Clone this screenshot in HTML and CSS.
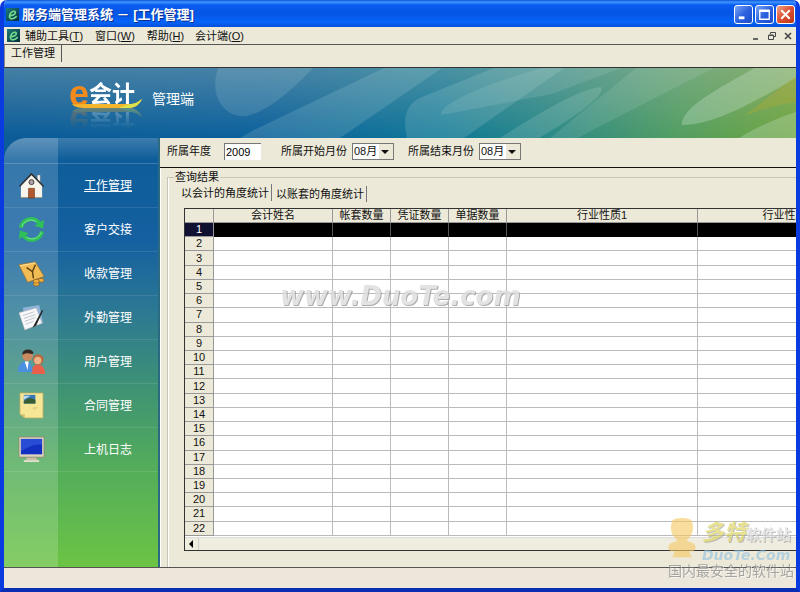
FILE: index.html
```html
<!DOCTYPE html>
<html lang="zh-CN">
<head>
<meta charset="utf-8">
<title>服务端管理系统</title>
<link rel="stylesheet" href="styles.css">
</head>
<body>
<svg class="defs" aria-hidden="true">
  <defs>
    <linearGradient id="badge" x1="0" y1="0" x2="1" y2="1"><stop offset="0" stop-color="#1f7c7a"/><stop offset="1" stop-color="#052a3a"/></linearGradient>
    <symbol id="app" viewBox="0 0 14 14">
      <rect width="14" height="14" fill="url(#badge)"/>
      <path d="M3.6 8.2C7 8.6 10.6 6.8 10 4.6 9.3 2.5 5.2 3.6 4 7.2c-.9 3 .4 4.6 2.6 4.4 2-.2 3.7-1.4 5-2.8" fill="none" stroke="#6fd98c" stroke-width="1.8"/>
    </symbol>
  </defs>
</svg>
<div class="window">
  <header class="titlebar">
    <svg class="app-icon"><use href="#app"/></svg>
    <h1>服务端管理系统 － [工作管理]</h1>
    <div class="controls">
      <button type="button" aria-label="最小化"><svg viewBox="0 0 18 18"><path d="M4 12.5h6" stroke="#fff" stroke-width="3"/></svg></button>
      <button type="button" aria-label="最大化"><svg viewBox="0 0 18 18"><path d="M4 5h10v9H4z" fill="none" stroke="#fff" stroke-width="1.4"/><path d="M3.5 5h11" stroke="#fff" stroke-width="2.6"/></svg></button>
      <button type="button" class="close" aria-label="关闭"><svg viewBox="0 0 18 18"><path d="M4.5 4.5l9 9m0-9l-9 9" stroke="#fff" stroke-width="2.2"/></svg></button>
    </div>
  </header>

  <nav class="menubar">
    <svg class="app-icon"><use href="#app"/></svg>
    <button type="button">辅助工具(<u>T</u>)</button>
    <button type="button">窗口(<u>W</u>)</button>
    <button type="button">帮助(<u>H</u>)</button>
    <button type="button">会计端(<u>O</u>)</button>
    <div class="mdi">
      <button type="button" aria-label="最小化子窗口"><svg viewBox="0 0 10 10"><path d="M2 8h5" stroke="#444" stroke-width="1.6"/></svg></button>
      <button type="button" aria-label="还原子窗口"><svg viewBox="0 0 10 10"><path d="M3.5 3V1.5h5v4H7M1.5 4.5h5v4h-5zM1.5 4h5" fill="none" stroke="#444"/></svg></button>
      <button type="button" aria-label="关闭子窗口"><svg viewBox="0 0 10 10"><path d="M2 2l6 6m0-6L2 8" stroke="#444" stroke-width="1.6"/></svg></button>
    </div>
  </nav>

  <div class="pages"><button type="button">工作管理</button></div>

  <div class="banner">
    <svg class="banner-art" viewBox="0 0 792 70" preserveAspectRatio="none" aria-hidden="true">
      <defs>
        <linearGradient id="hue"><stop offset="0" stop-color="#0a5c98"/><stop offset=".33" stop-color="#0b619c"/><stop offset=".55" stop-color="#0f7898"/><stop offset=".7" stop-color="#2c8a84"/><stop offset=".85" stop-color="#529e62"/><stop offset="1" stop-color="#70a63c"/></linearGradient>
        <linearGradient id="sheen" x2="0" y2="1"><stop offset="0" stop-color="#b0bcb8" stop-opacity=".36"/><stop offset="1" stop-color="#b0bcb8" stop-opacity="0"/></linearGradient>
      </defs>
      <rect width="792" height="70" fill="url(#hue)"/>
      <rect width="792" height="70" fill="url(#sheen)"/>
      <g fill="#dcefe8">
        <path d="M214 0c-10 30 8 50 28 48 22-4 48-28 67-48z" opacity=".14"/>
        <path d="M236 70l12-7L380 0h58L336 70z" opacity=".15"/>
        <path d="M403 70c-5-20-1-34 15-41L490 0h70L460 70z" opacity=".15"/>
        <path d="M437 47c-2-9 30-26 100-47h80L548 26z" opacity=".12"/>
        <path d="M496 70C535 45 575 21 597 19c5 8-20 26-62 51z" opacity=".16"/>
        <path d="M546 70L632 0h78c-35 18-80 40-136 70z" opacity=".12"/>
        <path d="M678 57c-2-18 44-40 72-57h42v10c-35 20-82 48-114 47z" opacity=".27"/>
        <path d="M735 70c16-10 38-20 57-26v26z" opacity=".25"/>
      </g>
      <path d="M792 8v26c-16 2-36 8-52 14 18-14 36-28 52-40z" fill="#c0a828" opacity=".3"/>
    </svg>
    <div class="brand">
      <span class="logo"><b class="logo-e">e</b><b>会计</b>
        <svg class="swoosh" viewBox="0 0 74 12" aria-hidden="true"><path d="M3 6c2 3 7 4 14 4h43c6 0 11-4 13-9-4 3-7 5-13 5H18C10 6 6 7 3 6z" fill="#f5b52a"/><path d="M50 10h10c6 0 11-4 13-9-4 3-7 5-13 5z" fill="#dde04a"/></svg>
      </span>
      <span class="edition">管理端</span>
    </div>
  </div>

  <div class="body">
    <nav class="sidebar">
      <ul>
        <li><a class="current" href="#work"><span class="pic"><svg viewBox="0 0 28 28"><path d="M20 3h3v8h-3z" fill="#fff" stroke="#777" stroke-width=".6"/><path d="M3 14L14 3l11 11v13H3z" fill="#f8f5ec"/><path d="M3 26.500h22" stroke="#9a9480"/><path d="M1.500 15L14 2l12.500 13" fill="none" stroke="#333" stroke-width="1.600"/><circle cx="14" cy="10.500" r="2.600" fill="#b0a0b0" stroke="#443" /><path d="M11 17h6v10h-6z" fill="#b05a30" stroke="#70300f" stroke-width=".7"/></svg></span><span>工作管理</span></a></li>
        <li><a href="#client"><span class="pic"><svg viewBox="0 0 28 28"><path d="M3 12C5 3 16 0 22 7.500M25 16C23 25 12 28 6 20.500" fill="none" stroke="#2fc058" stroke-width="4.200"/><path d="M27 4l-1 9-9-3zM1 24l1-9 9 3z" fill="#2fc058"/><path d="M4 11c2-6 9-9 15-5M24 17c-2 6-9 9-15 5" fill="none" stroke="#7fe79a"/></svg></span><span>客户交接</span></a></li>
        <li><a href="#receipt"><span class="pic"><svg viewBox="0 0 28 28"><path d="M1 5l17-3 9 15-17 6z" fill="#f2bc55" stroke="#a87020" stroke-width=".7"/><path d="M2 6l16-3" stroke="#ffe3a0"/><path d="M9 8l6 4 3-7M15 12l1 7" fill="none" stroke="#604010" stroke-width="1.500"/><g fill="#f0b040" stroke="#8a5a10" stroke-width=".7"><ellipse cx="19" cy="25" rx="3" ry="2"/><ellipse cx="24" cy="21" rx="3" ry="2"/><ellipse cx="19" cy="22" rx="3" ry="2"/></g></svg></span><span>收款管理</span></a></li>
        <li><a href="#field"><span class="pic"><svg viewBox="0 0 28 28"><path d="M5 4l17-3 4 19-17 4z" fill="#8fb4dc"/><path d="M1 9l18-5 6 16-18 7z" fill="#f8f8fa" stroke="#aaa" stroke-width=".6"/><path d="M5 12l12-4M6 15l12-4M7 18l11-4M8 21l8-3" stroke="#bcc3cc"/><path d="M25 6L17 21l-2 4 4-3 7-15z" fill="#252525"/></svg></span><span>外勤管理</span></a></li>
        <li><a href="#user"><span class="pic"><svg viewBox="0 0 28 28"><path d="M14 27c0-8 3-10 7-10s7 4 7 10z" fill="#e8604c"/><circle cx="21" cy="12" r="5.500" fill="#b8683a"/><circle cx="20.500" cy="13" r="3.800" fill="#eeb488"/><path d="M0 25c0-8 4-11 8-11 5 0 7 4 7 11z" fill="#4c8fe0"/><path d="M7 14h4l-1 9z" fill="#fff"/><circle cx="10" cy="8" r="5.500" fill="#c98a60"/><path d="M4.500 7C4 0 15 0 16 5c0 3-7-1-9 1z" fill="#332822"/></svg></span><span>用户管理</span></a></li>
        <li><a href="#contract"><span class="pic"><svg viewBox="0 0 28 28"><path d="M2 1h24v26H7l-5-4z" fill="#f5e796" stroke="#b8a860" stroke-width=".8"/><path d="M2 23h5v4z" fill="#cfc070"/><path d="M6 3h12v9H6z" fill="#3978b8"/><path d="M6 10c4-5 8-4 12-2v4H6z" fill="#375d30"/><path d="M6 4h7L6 8z" fill="#b8dcf0"/><path d="M15 17l4-1M17 19l3-3" stroke="#d8c672"/></svg></span><span>合同管理</span></a></li>
        <li><a href="#log"><span class="pic"><svg viewBox="0 0 28 28"><path d="M10 21h8l2 4H8z" fill="#c8c0a8"/><path d="M6 25h16v2H6z" fill="#e4deca"/><path d="M1 1h26v21H1z" fill="#dcd4bc" stroke="#8a846c" stroke-width=".8"/><path d="M3 3h22v16H3z" fill="#1230c0"/><path d="M3 3h22v6C16 8 10 12 3 16z" fill="#4a78f0" opacity=".4"/></svg></span><span>上机日志</span></a></li>
      </ul>
    </nav>

    <main>
      <form class="filters">
        <label for="year">所属年度</label><input id="year" type="text" value="2009">
        <label for="from">所属开始月份</label><span class="combo"><select id="from"><option>08月</option></select></span>
        <label for="to">所属结束月份</label><span class="combo"><select id="to"><option>08月</option></select></span>
      </form>
      <section class="results">
        <fieldset>
          <legend>查询结果</legend>
          <div class="tabs"><button type="button" class="active">以会计的角度统计</button><button type="button">以账套的角度统计</button></div>
          <div class="grid">
            <div class="grid-view">
              <table>
                <colgroup><col class="c-no"><col class="c-name"><col class="c-num"><col class="c-num"><col class="c-num"><col class="c-kind"><col class="c-last"></colgroup>
                <thead><tr><th></th><th>会计姓名</th><th>帐套数量</th><th>凭证数量</th><th>单据数量</th><th>行业性质1</th><th>行业性质2</th></tr></thead>
                <tbody>
                  <tr class="selected"><th>1</th><td></td><td></td><td></td><td></td><td></td><td></td></tr>
                  <tr><th>2</th><td></td><td></td><td></td><td></td><td></td><td></td></tr>
                  <tr><th>3</th><td></td><td></td><td></td><td></td><td></td><td></td></tr>
                  <tr><th>4</th><td></td><td></td><td></td><td></td><td></td><td></td></tr>
                  <tr><th>5</th><td></td><td></td><td></td><td></td><td></td><td></td></tr>
                  <tr><th>6</th><td></td><td></td><td></td><td></td><td></td><td></td></tr>
                  <tr><th>7</th><td></td><td></td><td></td><td></td><td></td><td></td></tr>
                  <tr><th>8</th><td></td><td></td><td></td><td></td><td></td><td></td></tr>
                  <tr><th>9</th><td></td><td></td><td></td><td></td><td></td><td></td></tr>
                  <tr><th>10</th><td></td><td></td><td></td><td></td><td></td><td></td></tr>
                  <tr><th>11</th><td></td><td></td><td></td><td></td><td></td><td></td></tr>
                  <tr><th>12</th><td></td><td></td><td></td><td></td><td></td><td></td></tr>
                  <tr><th>13</th><td></td><td></td><td></td><td></td><td></td><td></td></tr>
                  <tr><th>14</th><td></td><td></td><td></td><td></td><td></td><td></td></tr>
                  <tr><th>15</th><td></td><td></td><td></td><td></td><td></td><td></td></tr>
                  <tr><th>16</th><td></td><td></td><td></td><td></td><td></td><td></td></tr>
                  <tr><th>17</th><td></td><td></td><td></td><td></td><td></td><td></td></tr>
                  <tr><th>18</th><td></td><td></td><td></td><td></td><td></td><td></td></tr>
                  <tr><th>19</th><td></td><td></td><td></td><td></td><td></td><td></td></tr>
                  <tr><th>20</th><td></td><td></td><td></td><td></td><td></td><td></td></tr>
                  <tr><th>21</th><td></td><td></td><td></td><td></td><td></td><td></td></tr>
                  <tr><th>22</th><td></td><td></td><td></td><td></td><td></td><td></td></tr>
                </tbody>
              </table>
            </div>
            <div class="scroll"><button type="button" aria-label="向左滚动"><svg viewBox="0 0 12 12"><path d="M8 2v8L4 6z"/></svg></button></div>
          </div>
        </fieldset>
      </section>
    </main>
  </div>
  <footer class="status"></footer>

  <div class="mark-center">www.DuoTe.com</div>
  <div class="mark-corner">
    <svg viewBox="0 0 32 48" aria-hidden="true"><path d="M5 4C8 0 24 0 27 4c3 7 2 15-3 20l-3 3 8 3c4 3 3 7 0 9h-5l3 7H5l3-7H3c-3-2-4-6 0-9l8-3-3-3C3 19 2 11 5 4z" fill="#f6c860"/></svg>
    <div><span class="cn">多特<small>软件站</small></span><span class="en">DuoTe.Com</span></div>
    <p>国内最安全的软件站</p>
  </div>
</div>
</body>
</html>
```
FILE: styles.css
```css
* { box-sizing: border-box; }

body {
  margin: 0;
  font: 11px/14px "Liberation Sans", "Noto Sans CJK SC", sans-serif;
  color: #111;
}

button { margin: 0; padding: 0; border: 0; background: none; font: inherit; color: inherit; white-space: nowrap; }
svg { display: block; }
.defs { position: absolute; width: 0; height: 0; }

.window {
  position: relative;
  display: flex;
  flex-direction: column;
  min-height: 100vh;
  overflow: hidden;
  border: solid #0a3be0;
  border-width: 0 4px 4px;
  border-bottom-color: #0a2fb4;
  border-radius: 7px 7px 0 0;
  background: #ece9d8;
}

/* Title bar */
.titlebar {
  display: flex;
  align-items: center;
  gap: 3px;
  height: 27px;
  margin: 0 -4px;
  padding: 2px 5px 0 6px;
  background: linear-gradient(#0b50d8, #3f96ff 2px, #0a5cf0 5px, #0455e4 14px, #0664fa 22px, #0450d8);
}
.titlebar h1 { margin: 0; font-size: 13px; line-height: 16px; color: #fff; text-shadow: 1px 1px #0a2f90; white-space: nowrap; }
.app-icon { flex: none; width: 13px; height: 13px; }
.controls { display: flex; gap: 2px; margin-left: auto; }
.controls button {
  width: 19px;
  height: 19px;
  border: 1px solid #fff;
  border-radius: 3px;
  background: linear-gradient(135deg, #7ba4f4, #2c62e0 50%, #1c4cc8);
}
.controls .close { background: linear-gradient(135deg, #f0a088, #dc5030 50%, #b83418); }

/* Menu bar */
.menubar {
  display: flex;
  align-items: center;
  gap: 12px;
  height: 18px;
  padding: 0 3px;
  border-bottom: 1px solid #555;
}
.menubar .app-icon { margin-right: -7px; }
.menubar > button:nth-of-type(4) { margin-left: -1px; }
.mdi { display: flex; gap: 6px; margin-left: auto; }
.mdi svg { width: 10px; height: 10px; }

.pages {
  height: 23px;
  border-left: 1px solid #888;
  border-bottom: 1px solid #333;
}
.pages button { height: 17px; padding: 0 6px; border-right: 1px solid #555; line-height: 17px; }

/* Banner */
.banner { position: relative; height: 70px; background: #0b5c98; }
.banner-art { position: absolute; inset: 0; width: 100%; height: 100%; }
.brand { position: relative; display: flex; align-items: center; gap: 9px; padding: 10px 0 0 65px; color: #fff; }
.logo { position: relative; display: flex; align-items: center; width: 74px; height: 32px; -webkit-box-reflect: below -4px linear-gradient(transparent 30%, rgba(255, 255, 255, .35)); }
.logo b { font-size: 23px; line-height: 28px; }
.logo .logo-e { font-size: 36px; line-height: 28px; color: #f58a1c; }
.swoosh { position: absolute; left: 0; bottom: 0; width: 74px; height: 12px; }
.edition { padding-top: 10px; font-size: 14px; line-height: 18px; }

/* Sidebar */
.body { display: flex; flex: 1; background: #0b5c98; }
.sidebar {
  flex: none;
  width: 156px;
  border-right: 2px solid #2b6a80;
  border-radius: 22px 0 0;
  background:
    linear-gradient(rgba(255, 255, 255, .2), transparent 22px),
    linear-gradient(90deg, rgba(255, 255, 255, .17) 54px, transparent 54px),
    linear-gradient(#0c5c98, #1560a0 24%, #2b7894 40%, #3e9274 58%, #52ac5c 76%, #6cc444);
}
.sidebar ul { margin: 25px 0 0; padding: 0; list-style: none; border-top: 1px solid rgba(255, 255, 255, .18); }
.sidebar li { border-bottom: 1px solid rgba(255, 255, 255, .1); }
.sidebar a { display: grid; grid-template-columns: 54px 1fr; align-items: center; height: 43px; color: #fff; font-size: 12px; text-align: center; text-decoration: none; }
.sidebar .current { text-decoration: underline; }
.pic { display: grid; justify-items: center; }
.pic svg { width: 27px; height: 27px; }

/* Filters */
main { display: flex; flex: 1; flex-direction: column; min-width: 0; background: #ece9d8; }
.filters { display: flex; align-items: center; height: 30px; padding: 0 7px 3px; border-bottom: 1px solid #111; white-space: nowrap; }
.filters input {
  width: 37px;
  height: 17px;
  margin: 0 20px 0 13px;
  padding: 0 1px;
  border: solid #777;
  border-width: 1px 0 0 1px;
  background: #fff;
  font: inherit;
}
.combo { position: relative; margin: 0 14px 0 5px; }
.combo select {
  display: block;
  width: 42px;
  height: 17px;
  padding: 0 1px;
  border: 1px solid #777;
  border-radius: 0;
  appearance: none;
  background: linear-gradient(90deg, #fff 26px, #ece9d8 26px);
  color: #111;
  font: inherit;
}
.combo::after { content: ""; position: absolute; right: 5px; top: 7px; border: 4px solid transparent; border-top-color: #111; pointer-events: none; }

/* Results */
.results { display: flex; flex: 1; flex-direction: column; padding: 2px 0 0 6px; border-left: 1px solid #fff; }
fieldset {
  display: flex;
  flex: 1;
  flex-direction: column;
  min-width: 0;
  margin: 0;
  padding: 0 0 16px 16px;
  border: solid #c8c5b4;
  border-width: 1px 0 0 1px;
  box-shadow: inset 1px 0 #fff;
}
legend { margin-left: -10px; padding: 0 1px; }
.tabs { display: flex; height: 24px; }
.tabs button { height: 16px; margin-top: 2px; padding: 0 2px 0 4px; border-right: 1px solid #777; line-height: 16px; }
.tabs .active { height: 17px; margin: 0 0 0 -7px; }

.grid { display: flex; flex: 1; flex-direction: column; border: solid #333; border-width: 1px 0 1px 1px; }
.grid-view { flex: 1; display: grid; overflow: hidden; background: #fff; }
table { width: 693px; height: 327px; border-collapse: separate; border-spacing: 0; table-layout: fixed; }
.c-no { width: 29px; }
.c-name { width: 119px; }
.c-num { width: 58px; }
.c-kind { width: 191px; }
.c-last { width: 180px; }
th, td { height: 14px; padding: 0; border: solid #bbb; border-width: 0 1px 1px 0; font-weight: normal; line-height: 13px; }
th { background: #ece9d8; border-color: #999; text-align: center; }
.selected th { background: #101030; color: #fff; }
.selected td { background: #000; border-color: #000 #555 #000 #000; }
.scroll { height: 13px; border-top: 1px solid #ddd; background: #efece0; }
.scroll button { display: block; width: 14px; border-right: 1px solid #ccc; }
.scroll svg { width: 12px; height: 12px; }

.status { height: 21px; border-top: 1px solid #555; background: #ece7da; }

/* Watermarks lie over the window */
.mark-center {
  position: absolute;
  left: 276px;
  top: 282px;
  color: #ddd;
  font: italic bold 24px/28px "DejaVu Sans", sans-serif;
  font-size: 26px;
  text-shadow: 1px 1px #999;
  opacity: .8;
  pointer-events: none;
}
.mark-corner {
  position: absolute;
  right: 0;
  bottom: 8px;
  display: grid;
  grid-template-columns: 30px 1fr;
  column-gap: 4px;
  width: 128px;
  opacity: .6;
  pointer-events: none;
}
.mark-corner svg { width: 28px; height: 44px; }
.mark-corner span { display: block; white-space: nowrap; }
.cn { font: italic bold 22px/28px "Noto Sans CJK SC", sans-serif; color: #d9cf4a; text-shadow: 1px 1px #999; }
.cn small { font-size: 15px; font-style: normal; color: #ddd; }
.en { font: italic bold 14px/14px "DejaVu Sans", sans-serif; color: #8fc0e0; }
.mark-corner p { grid-column: 1 / -1; margin: 0; color: #777; font-size: 14px; line-height: 18px; text-shadow: 1px 1px #fff; white-space: nowrap; }
```
